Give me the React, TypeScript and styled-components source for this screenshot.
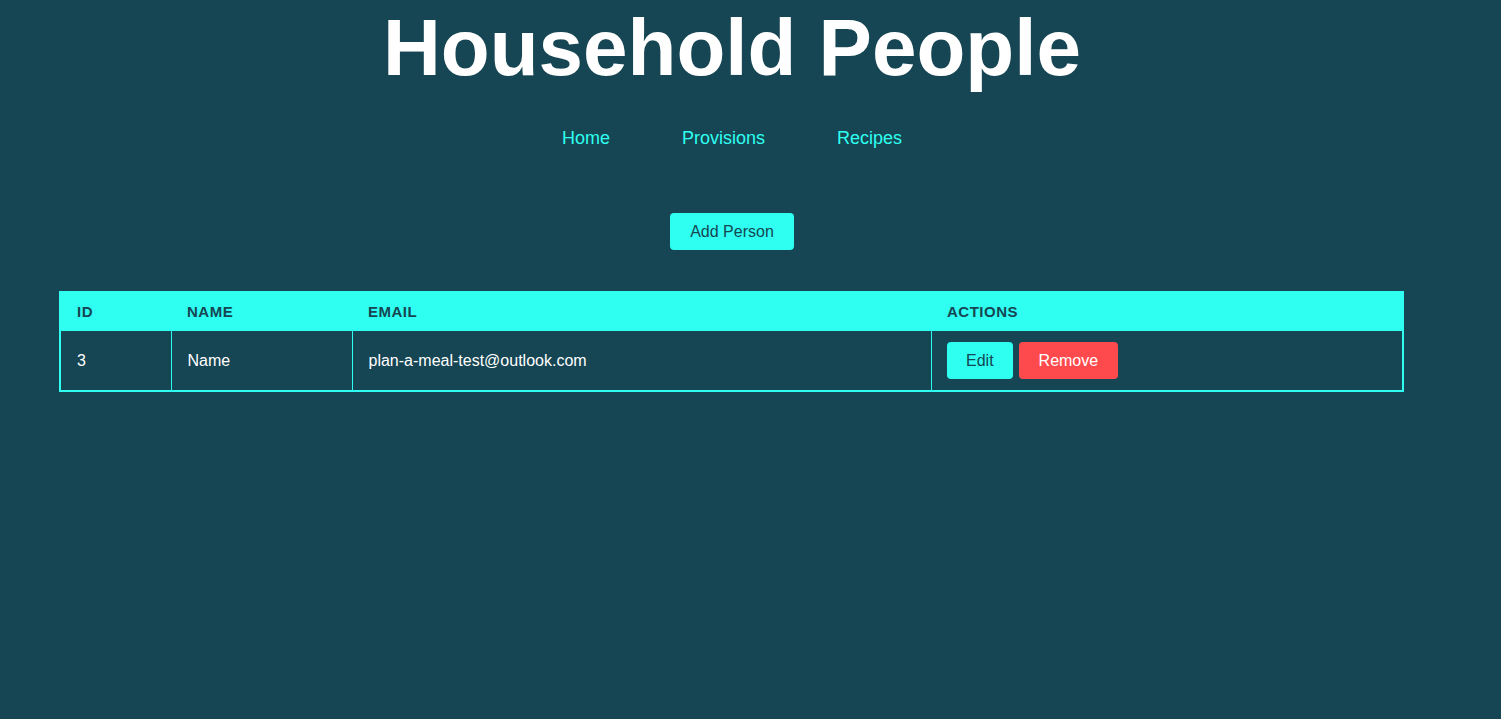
import React from "react";
import styled, { createGlobalStyle } from "styled-components";

const BG = "#164553";
const CYAN = "#2efff0";
const RED = "#ff4a4d";

const Global = createGlobalStyle`
  html, body {
    margin: 0;
    padding: 0;
    background: ${BG};
    font-family: "Liberation Sans", Arial, sans-serif;
  }
  body { min-height: 719px; }
`;

const Page = styled.div`
  width: 1464px;
  display: flex;
  flex-direction: column;
  align-items: center;
`;

const Title = styled.h1`
  margin: 2px 0 0;
  font-size: 80px;
  line-height: 92px;
  font-weight: 700;
  color: #ffffff;
`;

const Nav = styled.nav`
  margin-top: 34px;
  display: flex;
  gap: 72px;
`;

const NavLink = styled.a`
  color: ${CYAN};
  font-size: 18px;
  line-height: 21px;
  text-decoration: none;
  cursor: pointer;
`;

const Button = styled.button<{ $variant?: "primary" | "danger"; $compact?: boolean }>`
  font-family: "Liberation Sans", Arial, sans-serif;
  font-size: 16px;
  line-height: 17px;
  padding: ${(p) => (p.$compact ? "10px 19.5px" : "10px 20px")};
  border: none;
  border-radius: 4px;
  cursor: pointer;
  background: ${(p) => (p.$variant === "danger" ? RED : CYAN)};
  color: ${(p) => (p.$variant === "danger" ? "#ffffff" : BG)};
`;

const AddRow = styled.div`
  margin-top: 64px;
`;

const Table = styled.table`
  margin-top: 41px;
  width: 1343px;
  margin-left: -1px;
  border-collapse: collapse;
  table-layout: fixed;
  border: 2px solid ${CYAN};
`;

const Th = styled.th`
  background: ${CYAN};
  color: ${BG};
  text-align: left;
  font-size: 15px;
  letter-spacing: 0.5px;
  font-weight: 700;
  text-transform: uppercase;
  padding: 10px 16px 11px;
  line-height: 17px;
`;

const Td = styled.td`
  color: #ffffff;
  font-size: 16px;
  line-height: 18px;
  padding: 11px 16px;
  height: 37px;
  border-left: 1px solid ${CYAN};
`;

const Actions = styled.div`
  display: flex;
  gap: 6px;
  margin-left: -1px;
`;

export default function App() {
  return (
    <>
      <Global />
      <Page>
        <Title>Household People</Title>
        <Nav>
          <NavLink>Home</NavLink>
          <NavLink>Provisions</NavLink>
          <NavLink>Recipes</NavLink>
        </Nav>
        <AddRow>
          <Button>Add Person</Button>
        </AddRow>
        <Table>
          <colgroup>
            <col style={{ width: 111 }} />
            <col style={{ width: 181 }} />
            <col style={{ width: 579 }} />
            <col style={{ width: 472 }} />
          </colgroup>
          <thead>
            <tr>
              <Th>ID</Th>
              <Th>Name</Th>
              <Th>Email</Th>
              <Th>Actions</Th>
            </tr>
          </thead>
          <tbody>
            <tr>
              <Td>3</Td>
              <Td>Name</Td>
              <Td>plan-a-meal-test@outlook.com</Td>
              <Td>
                <Actions>
                  <Button $compact>Edit</Button>
                  <Button $compact $variant="danger">Remove</Button>
                </Actions>
              </Td>
            </tr>
          </tbody>
        </Table>
      </Page>
    </>
  );
}
